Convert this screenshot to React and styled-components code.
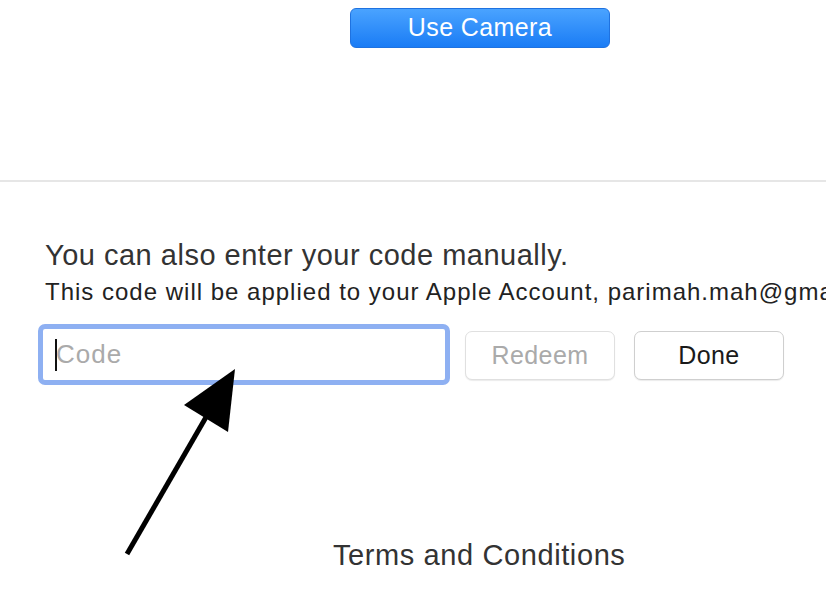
import styled, { createGlobalStyle } from "styled-components";

const GlobalStyle = createGlobalStyle`
  html, body {
    margin: 0;
    padding: 0;
    background: #ffffff;
  }
  body {
    font-family: "Liberation Sans", Arial, sans-serif;
    overflow: hidden;
  }
`;

function App() {
  return (
    <Page>
      <GlobalStyle />
      <CameraSection>
        <CameraButton type="button">Use Camera</CameraButton>
      </CameraSection>

      <Divider />

      <ManualSection>
        <Heading>You can also enter your code manually.</Heading>
        <SubText>
          This code will be applied to your Apple Account, parimah.mah@gmail.com.
        </SubText>

        <FormRow>
          <CodeField>
            <Caret />
            <Placeholder>Code</Placeholder>
          </CodeField>
          <ActionButton type="button" disabled>
            Redeem
          </ActionButton>
          <ActionButton type="button">Done</ActionButton>
        </FormRow>

        <Terms>Terms and Conditions</Terms>
      </ManualSection>

      <Arrow viewBox="0 0 140 200" width="140" height="200">
        <line x1="22" y1="186" x2="104" y2="44" stroke="#000" strokeWidth="5" />
        <polygon points="130,1 79,37 123,64" fill="#000" />
      </Arrow>
    </Page>
  );
}

export default App;

const Page = styled.div`
  position: relative;
  width: 826px;
  height: 604px;
  overflow: hidden;
  background: #fff;
`;

const CameraSection = styled.section`
  height: 180px;
  padding: 8px 0 0 350px;
  box-sizing: border-box;
`;

const CameraButton = styled.button`
  display: block;
  width: 260px;
  height: 40px;
  border: 1px solid #1f72e0;
  border-radius: 6px;
  background: linear-gradient(#4aa3ff, #1a7cf5);
  color: #fff;
  font-family: "Liberation Sans", Arial, sans-serif;
  font-size: 25px;
  letter-spacing: 0.4px;
  padding: 0 0 2px;
`;

const Divider = styled.hr`
  margin: 0;
  border: none;
  height: 2px;
  background: #e6e6e6;
`;

const ManualSection = styled.section`
  padding: 56px 0 0 45px;
`;

const Heading = styled.h2`
  margin: 0;
  font-size: 29px;
  font-weight: 400;
  letter-spacing: 0.5px;
  color: #333;
  line-height: 34px;
  white-space: nowrap;
`;

const SubText = styled.p`
  margin: 6px 0 0;
  font-size: 24px;
  letter-spacing: 1px;
  color: #222;
  line-height: 28px;
  white-space: nowrap;
`;

const FormRow = styled.div`
  display: flex;
  align-items: center;
  gap: 15px;
  margin: 18px 0 0 -7px;
`;

const CodeField = styled.div`
  display: flex;
  align-items: center;
  width: 412px;
  height: 61px;
  box-sizing: border-box;
  border: 5px solid #8eb0f2;
  border-radius: 7px;
  padding-left: 12px;
  background: #fff;
`;

const Caret = styled.span`
  width: 2px;
  height: 32px;
  background: #111;
`;

const Placeholder = styled.span`
  font-size: 26px;
  letter-spacing: 1px;
  color: #aaa;
  margin-left: -1px;
`;

const ActionButton = styled.button`
  width: 150px;
  height: 49px;
  margin-top: 1px;
  border: 1px solid ${({ disabled }) => (disabled ? "#e0e0e0" : "#cfcfcf")};
  border-radius: 7px;
  background: #fff;
  color: ${({ disabled }) => (disabled ? "#aaa" : "#1a1a1a")};
  font-family: "Liberation Sans", Arial, sans-serif;
  font-size: 25px;
  letter-spacing: 0.4px;
  box-shadow: 0 1px 1px rgba(0, 0, 0, 0.08);
  & + & {
    margin-left: 4px;
  }
`;

const Terms = styled.p`
  margin: 153px 0 0 288px;
  font-size: 29px;
  letter-spacing: 0.6px;
  color: #333;
  line-height: 34px;
`;

const Arrow = styled.svg`
  position: absolute;
  left: 105px;
  top: 368px;
`;
